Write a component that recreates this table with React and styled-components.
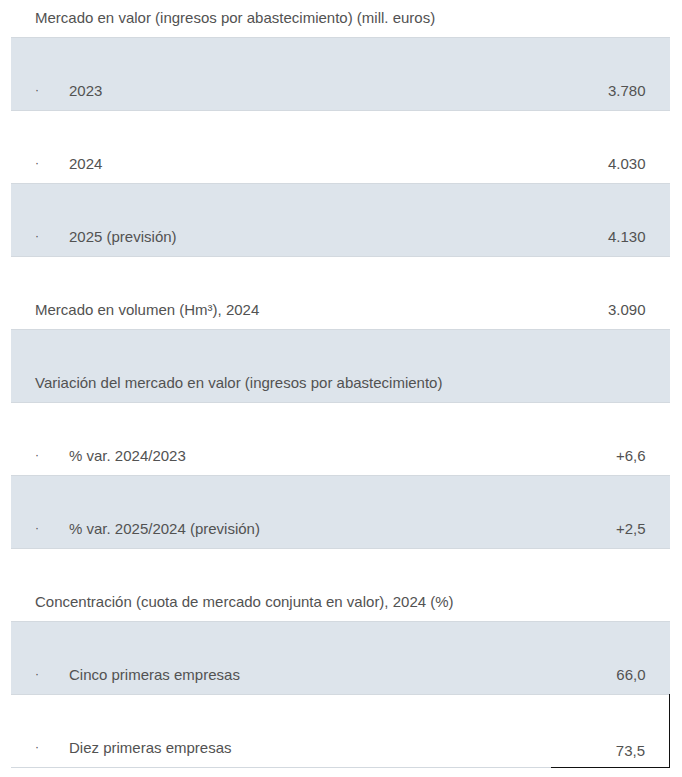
import React from "react";
import styled, { createGlobalStyle } from "styled-components";

const rows = [
  { label: "Mercado en valor (ingresos por abastecimiento) (mill. euros)", value: "", first: true },
  { label: "2023", value: "3.780", sub: true },
  { label: "2024", value: "4.030", sub: true },
  { label: "2025 (previsión)", value: "4.130", sub: true },
  { label: "Mercado en volumen (Hm³), 2024", value: "3.090" },
  { label: "Variación del mercado en valor (ingresos por abastecimiento)", value: "" },
  { label: "% var. 2024/2023", value: "+6,6", sub: true },
  { label: "% var. 2025/2024 (previsión)", value: "+2,5", sub: true },
  { label: "Concentración (cuota de mercado conjunta en valor), 2024 (%)", value: "" },
  { label: "Cinco primeras empresas", value: "66,0", sub: true },
  { label: "Diez primeras empresas", value: "73,5", sub: true, focused: true },
];

export default function App() {
  return (
    <>
      <GlobalStyle />
      <Page>
        <Table>
          <tbody>
            {rows.map((row, i) => (
              <Row key={i} $shaded={i % 2 === 1} $first={row.first}>
                <LabelCell>
                  {row.sub ? (
                    <SubLabel>
                      <Dot>·</Dot>
                      {row.label}
                    </SubLabel>
                  ) : (
                    row.label
                  )}
                </LabelCell>
                <ValueCell $focused={row.focused}>{row.value}</ValueCell>
              </Row>
            ))}
          </tbody>
        </Table>
      </Page>
    </>
  );
}

const GlobalStyle = createGlobalStyle`
  body {
    margin: 0;
    background: #ffffff;
    font-family: "Liberation Sans", Arial, sans-serif;
  }
`;

const Page = styled.div`
  padding: 0 12px 0 11px;
`;

const Table = styled.table`
  width: 100%;
  border-collapse: collapse;
  font-size: 15px;
  color: #525252;
`;

const Row = styled.tr`
  height: ${(p) => (p.$first ? "37px" : "73px")};
  background: ${(p) => (p.$shaded ? "#dde4eb" : "#ffffff")};
  border-bottom: 1px solid #d3d9df;
`;

const LabelCell = styled.td`
  vertical-align: bottom;
  padding: 0 0 11px 24px;
  white-space: nowrap;
`;

const SubLabel = styled.div`
  display: flex;
  align-items: center;
`;

const Dot = styled.span`
  width: 34px;
  font-size: 12px;
`;

const ValueCell = styled.td`
  vertical-align: bottom;
  text-align: right;
  width: 94px;
  padding: 0 24px 11px 0;
  ${(p) =>
    p.$focused &&
    `
    border-right: 1px solid #111;
    border-bottom: 1px solid #111;
    padding-bottom: 8px;
  `}
`;
